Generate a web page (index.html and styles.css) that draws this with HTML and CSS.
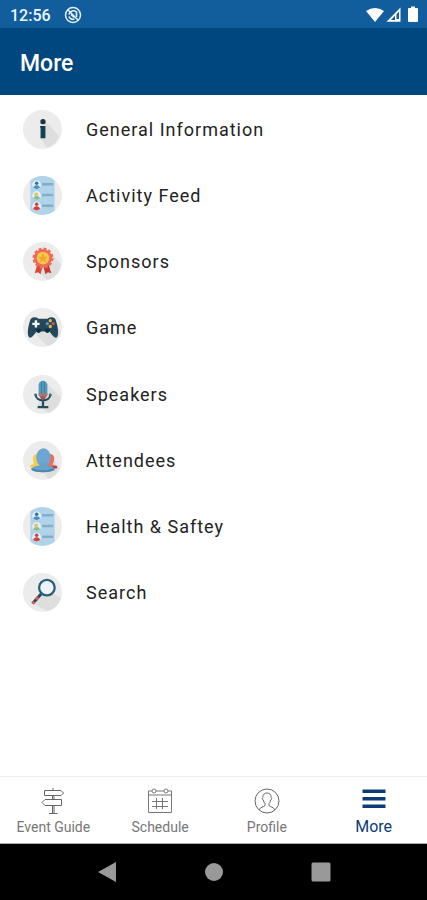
FILE: index.html
```html
<!DOCTYPE html>
<html lang="en">
<head>
<meta charset="utf-8">
<meta name="viewport" content="width=device-width, initial-scale=1">
<title>More</title>
<link rel="stylesheet" href="styles.css">
</head>
<body>
<svg class="defs" aria-hidden="true">
  <defs>
    <symbol id="feed" viewBox="0 0 40 40">
      <circle cx="20" cy="20" r="20" fill="#ececec"/>
      <path d="M7.500 4.500Q13 0 20 0T32.500 4.500V35.500Q27 40 20 40T7.500 35.500Z" fill="#b0d3e9"/>
      <circle cx="14" cy="9" r="4.500" fill="#e1f1fa"/>
      <circle cx="14" cy="20" r="4.500" fill="#e1f1fa"/>
      <circle cx="14" cy="31" r="4.500" fill="#e1f1fa"/>
      <path d="M10.500 12Q11 9.500 14 9.500T17.500 12L14 13.500Z" fill="#4a8fc0"/>
      <circle cx="14" cy="7.500" r="1.800" fill="#3b7198"/>
      <path d="M10.500 23Q11 20.500 14 20.500T17.500 23L14 24.500Z" fill="#8cbb98"/>
      <circle cx="13.500" cy="18.800" r="2" fill="#e6c455"/>
      <path d="M10.500 34Q11 31 14 31T17.500 34L14 35.500Z" fill="#d93f3a"/>
      <circle cx="14" cy="29" r="1.800" fill="#bd4c3d"/>
      <path d="M19.500 8.500H31M19.500 19.500H31M19.500 30.500H31" stroke="#82aecb" stroke-width="2.400"/>
    </symbol>
  </defs>
</svg>
<div class="app">
  <div class="status">
    <span class="time">12:56</span>
    <svg class="notice" viewBox="0 0 18 18" aria-hidden="true">
      <circle cx="9" cy="9" r="7.500" fill="none" stroke="#e3eef8" stroke-width="1.500"/>
      <path d="M5 8.500A4.500 4.500 0 0 1 12.500 6V11M5 10.500A4.500 4.500 0 0 0 10.500 13" fill="none" stroke="#e3eef8" stroke-width="1.700"/>
      <path d="M4 4L14 14M7 8.500L10 11.500" stroke="#e3eef8" stroke-width="1.500"/>
    </svg>
    <svg class="signals" viewBox="0 0 54 18" aria-hidden="true">
      <path d="M0 5Q9-1 18 5L9 16Z" fill="#fff"/>
      <path d="M20.500 15.800L34.500 1.500V15.800Z" fill="#fff"/>
      <path d="M25 14L29 9.500V14Z" fill="#155f9e"/>
      <path d="M30.500 8L33 5.500V13H30.500Z" fill="#155f9e"/>
      <path d="M43 2H45V.5H49V2H51Q52 2 52 3V15Q52 16 51 16H43Q42 16 42 15V3Q42 2 43 2Z" fill="#fff"/>
    </svg>
  </div>
  <header class="header"><h1>More</h1></header>
  <main class="content">
    <ul class="menu">
      <li><a class="row" href="#general">
        <svg class="icon" viewBox="0 0 40 40" aria-hidden="true">
          <circle cx="20" cy="20" r="20" fill="#ececec"/>
          <path d="M23 11L37 27Q34 35 25 39L18 29Z" fill="#dedede"/>
          <circle cx="20.500" cy="12" r="2.700" fill="#173646"/>
          <path d="M17.500 16.500H23V29H18V18H17.500Z" fill="#173f54"/>
        </svg><span>General Information</span></a></li>
      <li><a class="row" href="#activity"><svg class="icon" aria-hidden="true"><use href="#feed"/></svg><span>Activity Feed</span></a></li>
      <li><a class="row" href="#sponsors">
        <svg class="icon" viewBox="0 0 40 40" aria-hidden="true">
          <circle cx="20" cy="20" r="20" fill="#ececec"/>
          <path d="M29 12L39 23Q37 35 25 39L15 30Z" fill="#dedede"/>
          <path d="M15 22L12 32L15.500 31L18 33L20 25Z" fill="#d84935"/>
          <path d="M26 22L29 32L25.500 31L23 33L21 25Z" fill="#c8392d"/>
          <circle cx="20.500" cy="16.500" r="9.300" fill="#ee6c58"/>
          <circle cx="20.500" cy="16.500" r="9.500" fill="none" stroke="#ee6c58" stroke-width="2.500" stroke-dasharray="3 2"/>
          <circle cx="20.500" cy="16.500" r="6.500" fill="#fbc64b"/>
          <path d="M20.500 11.500L22 15L25.500 15.200L22.800 17.500L23.700 21L20.500 19L17.300 21L18.200 17.500L15.500 15.200L19 15Z" fill="#f0a52f"/>
        </svg><span>Sponsors</span></a></li>
      <li><a class="row" href="#game">
        <svg class="icon" viewBox="0 0 40 40" aria-hidden="true">
          <circle cx="20" cy="20" r="20" fill="#ececec"/>
          <path d="M33 16L39 25Q35 36 25 39L12 26Z" fill="#dedede"/>
          <path d="M8 11Q12 8 16 11H25Q29 8 33 11C35 16 37 24 35.500 29Q34 32 31 29L27 24H14L10 29Q7 32 5.500 29C4 24 6 16 8 11Z" fill="#24475a"/>
          <path d="M14.500 21A2.500 2.500 0 1 0 17.500 21M23.500 21A2.500 2.500 0 1 0 26.500 21" fill="#122f40"/>
          <path d="M12 12.500H14.500V15H17V17.500H14.500V20H12V17.500H9.500V15H12Z" fill="#f3f7f8"/>
          <circle cx="28" cy="13" r="1.700" fill="#e5b94e"/>
          <circle cx="25" cy="16" r="1.700" fill="#5f9bc8"/>
          <circle cx="31" cy="16" r="1.700" fill="#d85346"/>
          <circle cx="28" cy="19" r="1.700" fill="#e5b94e"/>
        </svg><span>Game</span></a></li>
      <li><a class="row" href="#speakers">
        <svg class="icon" viewBox="0 0 40 40" aria-hidden="true">
          <circle cx="20" cy="20" r="20" fill="#ececec"/>
          <path d="M24 8L39 23Q36 35 26 39L15 31Z" fill="#dedede"/>
          <path d="M13 20C13 28 28 28 28 20M20.500 26V32M15 33H26" fill="none" stroke="#244c60" stroke-width="2.300"/>
          <circle cx="13" cy="20.500" r="1.500" fill="#34736d"/><circle cx="28" cy="20.500" r="1.500" fill="#34736d"/>
          <rect x="16" y="6" width="9" height="18" rx="4.500" fill="#5597bf"/>
          <path d="M19 7V19M22 7V19" stroke="#35779e" stroke-width=".7"/>
          <path d="M16 19H25V21H16Z" fill="#d66551"/>
          <path d="M17 22H24Q23 25 20.500 25T17 22Z" fill="#bd4e43"/>
        </svg><span>Speakers</span></a></li>
      <li><a class="row" href="#attendees">
        <svg class="icon" viewBox="0 0 40 40" aria-hidden="true">
          <circle cx="20" cy="20" r="20" fill="#ececec"/>
          <path d="M32 20L38 28Q34 37 26 39L20 31Z" fill="#dedede"/>
          <path d="M7 27Q7 24 11 23.500Q8 14 14 13.500L18 15V27Z" fill="#f5cd4e"/>
          <path d="M24 14Q31 12 32 17Q32 22 30 24L34 25Q36 27 34 28H23Z" fill="#ed6e58"/>
          <path d="M29 26H35V28H29Z" fill="#b62f3d"/>
          <ellipse cx="21" cy="17" rx="7.500" ry="9.500" fill="#6da6d2"/>
          <path d="M17 22H25V25Q32 26 33 29Q29 32 20.500 32T8 29Q9 26 17 25Z" fill="#66a2ce"/>
          <path d="M9 28Q20 32 32 28V30Q28 32 20 32T9 30Z" fill="#4c89ab"/>
        </svg><span>Attendees</span></a></li>
      <li><a class="row" href="#health"><svg class="icon" aria-hidden="true"><use href="#feed"/></svg><span>Health &amp; Saftey</span></a></li>
      <li><a class="row" href="#search">
        <svg class="icon" viewBox="0 0 40 40" aria-hidden="true">
          <circle cx="20" cy="20" r="20" fill="#ececec"/>
          <path d="M31 21L39 26Q35 37 25 39L10 31L20 21Z" fill="#dedede"/>
          <path d="M19 21L10 31" stroke="#244d63" stroke-width="3"/>
          <path d="M15.500 25L13.500 27.200M11.500 29.500L9.500 31.500" stroke="#df5b4a" stroke-width="3.200"/>
          <circle cx="24.500" cy="15" r="8" fill="#edf4f7" stroke="#2b6076" stroke-width="2.300"/>
        </svg><span>Search</span></a></li>
    </ul>
  </main>
  <nav class="tabs" aria-label="Main">
    <a class="tab" href="#guide">
      <svg viewBox="0 0 28 28" aria-hidden="true" fill="none" stroke="#666">
        <path d="M14 1V3M5.500 3.500H22L24.500 6L22 8.500H5.500ZM6 12.500H22.500V18.500H6L3 15.500ZM13.500 9V12M15 9V12M13.500 18V26M15 18V26M10 26.500H18.500"/>
      </svg><span>Event Guide</span></a>
    <a class="tab" href="#schedule">
      <svg viewBox="0 0 28 28" aria-hidden="true" fill="none" stroke="#777">
        <path d="M6 4H2.500V25.500H25.500V4H22M10 4H18M2.500 8H25.500M6 14.500H22M6 19.500H22M10.500 11V22M16.500 11V22"/>
        <circle cx="8" cy="4" r="2"/><circle cx="20" cy="4" r="2"/>
      </svg><span>Schedule</span></a>
    <a class="tab" href="#profile">
      <svg viewBox="0 0 28 28" aria-hidden="true" fill="none" stroke="#666">
        <circle cx="14" cy="14" r="12"/>
        <path d="M6 23C7 20 11 20 12 18.500V16.500Q10.500 15.500 10.500 13C8.800 12.500 9 11 10 10.500C9 4.500 19 4.500 18 10.500C19 11 19.200 12.500 17.500 13Q17.500 15.500 16 16.500V18.500C17 20 21 20 22 23"/>
      </svg><span>Profile</span></a>
    <a class="tab active" href="#more" aria-current="page">
      <svg viewBox="0 0 28 28" aria-hidden="true"><path d="M2.500 2.500H25.500V6H2.500ZM2.500 10H25.500V13.500H2.500ZM2.500 17.500H25.500V21H2.500Z" fill="#0b3c78"/></svg><span>More</span></a>
  </nav>
  <div class="system">
    <button type="button" aria-label="Back"><svg viewBox="0 0 20 20"><path d="M1 10L19 0V20Z"/></svg></button>
    <button type="button" aria-label="Home"><svg viewBox="0 0 20 20"><circle cx="10" cy="10" r="9"/></svg></button>
    <button type="button" aria-label="Recent apps"><svg viewBox="0 0 20 20"><rect x=".5" y=".5" width="19" height="19" rx="1.500"/></svg></button>
  </div>
</div>
</body>
</html>
```
FILE: styles.css
```css
* { box-sizing: border-box; }
body {
  margin: 0;
  background: #fff;
  color: #222;
  font-family: Roboto, "Liberation Sans", sans-serif;
}
a { color: inherit; text-decoration: none; }
.defs { display: none; }
.app { display: flex; flex-direction: column; min-height: 100vh; }
.status {
  display: flex;
  align-items: center;
  height: 28px;
  padding: 2px 7px 0 10px;
  background: #125e9d;
  color: #f0f6fc;
  font-size: 16px;
  font-weight: 500;
}
.notice { width: 18px; height: 18px; margin-left: 13px; }
.signals { width: 54px; height: 18px; margin-left: auto; }
.header {
  display: flex;
  align-items: center;
  height: 67px;
  padding: 4px 20px 0;
  background: #00477f;
  color: #fff;
}
.header h1 { margin: 0; font-size: 23px; font-weight: 500; line-height: 28px; }
.content { flex: 1; padding-top: 1px; }
.menu {
  display: grid;
  grid-auto-rows: 1fr;
  min-height: 530px;
  margin: 0;
  padding: 0;
  list-style: none;
}
.row {
  display: flex;
  align-items: center;
  gap: 24px;
  height: 100%;
  padding: 0 23px;
  font-size: 18px;
  letter-spacing: 1px;
}
.icon { width: 39px; height: 39px; flex: none; }
.tabs {
  display: grid;
  grid-template-columns: repeat(4, 1fr);
  height: 68px;
  border-top: 1px solid #eee;
  border-bottom: 1px solid #aaa;
}
.tab {
  display: flex;
  flex-direction: column;
  align-items: center;
  padding-top: 10px;
  color: #777;
  font-size: 14px;
  line-height: 24px;
}
.tab svg { width: 28px; height: 28px; }
.tab.active { color: #0b3c78; font-size: 16px; }
.system {
  display: flex;
  justify-content: center;
  align-items: center;
  gap: 59px;
  height: 56px;
  background: #000;
}
.system button {
  display: flex;
  justify-content: center;
  width: 48px;
  padding: 0;
  border: 0;
  background: none;
}
.system svg { width: 20px; height: 20px; fill: #999; }
```
